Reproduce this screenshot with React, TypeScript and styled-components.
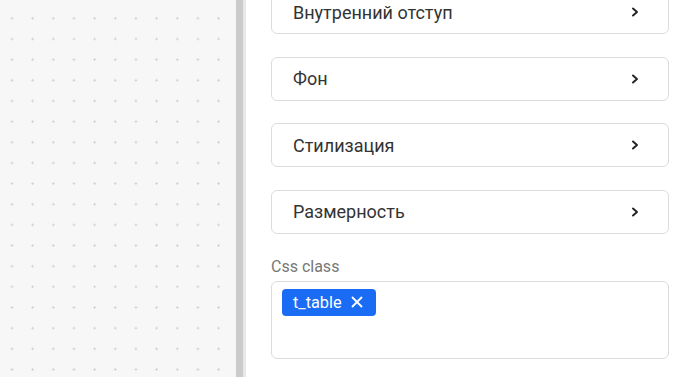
import React from "react";
import styled, { createGlobalStyle } from "styled-components";

const Global = createGlobalStyle`
  html, body { margin: 0; padding: 0; }
  body { font-family: Roboto, "Noto Sans", Arial, sans-serif; background: #fff; }
`;

const Screen = styled.div`
  display: flex;
  width: 690px;
  height: 377px;
  overflow: hidden;
`;

const Canvas = styled.div`
  width: 236px;
  flex: none;
  background-color: #f7f7f7;
  background-image: radial-gradient(circle, #cfcfcf 0.9px, transparent 1.3px);
  background-size: 20.67px 20.67px;
  background-position: 1.67px 8px;
`;

const ScrollTrack = styled.div`
  width: 7px;
  flex: none;
  background: #cbcbcb;
`;

const Edge = styled.div`
  width: 3px;
  flex: none;
  background: #e8e8e8;
`;

const Panel = styled.div`
  flex: 1;
  background: #fff;
  padding: 0 21px 0 25px;
  display: flex;
  flex-direction: column;
`;

const Sections = styled.div`
  margin-top: -10px;
  display: flex;
  flex-direction: column;
  gap: 22.5px;
`;

const Section = styled.div`
  height: 44px;
  box-sizing: border-box;
  border: 1px solid #dcdcdc;
  border-radius: 6px;
  display: flex;
  align-items: center;
  justify-content: space-between;
  padding: 0 28px 0 21px;
  color: #333;
  font-size: 18px;
`;

const Chevron = () => (
  <svg width="10" height="12" viewBox="0 0 10 12">
    <path d="M3 2.5 L7 6 L3 9.5" fill="none" stroke="#222" strokeWidth="1.9" strokeLinecap="round" strokeLinejoin="round" />
  </svg>
);

const Label = styled.div`
  margin-top: 24px;
  font-size: 16px;
  color: #777;
  line-height: 18px;
`;

const TagBox = styled.div`
  margin-top: 5px;
  height: 78px;
  box-sizing: border-box;
  border: 1px solid #dcdcdc;
  border-radius: 6px;
  padding: 7px 10px;
  display: flex;
  align-items: flex-start;
`;

const Tag = styled.span`
  display: inline-flex;
  align-items: center;
  gap: 9px;
  height: 27px;
  padding: 0 13px 0 11px;
  border-radius: 4px;
  background: #1a6cf5;
  color: #fff;
  font-size: 16.3px;
`;

const Close = () => (
  <svg width="12" height="12" viewBox="0 0 12 12">
    <path d="M1.5 1.5 L10.5 10.5 M10.5 1.5 L1.5 10.5" stroke="#fff" strokeWidth="1.8" strokeLinecap="round" />
  </svg>
);

const items = ["Внутренний отступ", "Фон", "Стилизация", "Размерность"];

export default function App() {
  return (
    <>
      <Global />
      <Screen>
        <Canvas />
        <ScrollTrack />
        <Edge />
        <Panel>
          <Sections>
            {items.map((t) => (
              <Section key={t}>
                <span>{t}</span>
                <Chevron />
              </Section>
            ))}
          </Sections>
          <Label>Css class</Label>
          <TagBox>
            <Tag>
              t_table
              <Close />
            </Tag>
          </TagBox>
        </Panel>
      </Screen>
    </>
  );
}
